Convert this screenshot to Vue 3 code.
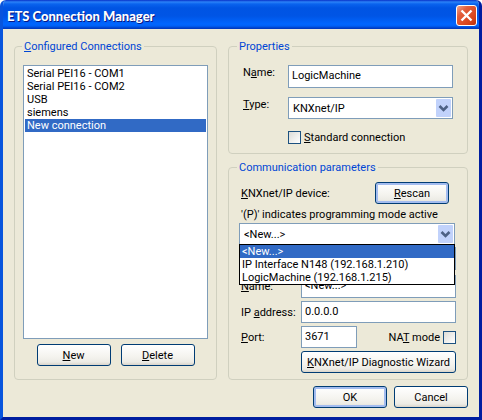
<script setup>
import { ref } from 'vue'

const connections = ref(['Serial PEI16 - COM1', 'Serial PEI16 - COM2', 'USB', 'siemens', 'New connection'])
const current = ref('New connection')
const name = ref('LogicMachine')
const type = ref('KNXnet/IP')
const standard = ref(false)

const devices = ['<New...>', 'IP Interface N148 (192.168.1.210)', 'LogicMachine (192.168.1.215)']
const device = ref(devices[0])
const listOpen = ref(true)
const deviceName = ref('<New...>')
const address = ref('0.0.0.0')
const port = ref('3671')
const nat = ref(false)

function pickDevice(item) {
  device.value = item
  listOpen.value = false
}
</script>

<template>
  <main class="window">
    <header class="titlebar">
      <h1>ETS Connection Manager</h1>
      <button class="close" type="button" aria-label="Close">
        <svg viewBox="0 0 19 19" aria-hidden="true">
          <path d="M4.5 4.5 L14.5 14.5 M14.5 4.5 L4.5 14.5" stroke="#fff" stroke-width="2.4" fill="none" />
        </svg>
      </button>
    </header>

    <form class="body" @submit.prevent>
      <div class="columns">
        <fieldset class="connections">
          <legend><u>C</u>onfigured Connections</legend>
          <ul class="list" role="listbox" aria-label="Configured Connections">
            <li
              v-for="item in connections"
              :key="item"
              role="option"
              :aria-selected="item === current"
              :class="{ selected: item === current }"
              @click="current = item"
            >{{ item }}</li>
          </ul>
          <div class="list-actions">
            <button class="btn" type="button"><span><u>N</u>ew</span></button>
            <button class="btn" type="button"><span><u>D</u>elete</span></button>
          </div>
        </fieldset>

        <div class="side">
          <fieldset class="properties">
            <legend>Properties</legend>
            <label for="name">N<u>a</u>me:</label>
            <input id="name" v-model="name" class="field tall" type="text">
            <label for="type"><u>T</u>ype:</label>
            <div class="combo">
              <select id="type" v-model="type" class="field">
                <option>KNXnet/IP</option>
              </select>
              <svg class="arrow" viewBox="0 0 15 18" aria-hidden="true">
                <rect width="15" height="18" rx="1" fill="#c1d2fb" />
                <path d="M3.5 7 L7.5 11 L11.5 7" stroke="#4d6185" stroke-width="2.6" fill="none" />
              </svg>
            </div>
            <div class="check standard">
              <input id="standard" v-model="standard" type="checkbox">
              <label for="standard"><u>S</u>tandard connection</label>
            </div>
          </fieldset>

          <fieldset class="communication">
            <legend>Communication parameters</legend>
            <div class="device-row">
              <label for="device"><u>K</u>NXnet/IP device:</label>
              <button class="btn focus" type="button"><span><u>R</u>escan</span></button>
            </div>
            <p class="note">'(P)' indicates programming mode active</p>
            <div class="combo device">
              <select id="device" v-model="device" class="field">
                <option v-for="item in devices" :key="item">{{ item }}</option>
              </select>
              <svg class="arrow" viewBox="0 0 15 18" aria-hidden="true">
                <rect width="15" height="18" rx="1" fill="#c1d2fb" />
                <path d="M3.5 7 L7.5 11 L11.5 7" stroke="#4d6185" stroke-width="2.6" fill="none" />
              </svg>
              <ul v-if="listOpen" class="popup" role="listbox" aria-label="Devices">
                <li
                  v-for="item in devices"
                  :key="item"
                  role="option"
                  :aria-selected="item === device"
                  :class="{ selected: item === device }"
                  @click="pickDevice(item)"
                >{{ item }}</li>
              </ul>
            </div>
            <input class="field tall medium" type="text" aria-label="Communication medium" disabled>
            <div class="params">
              <label for="device-name"><u>N</u>ame:</label>
              <input id="device-name" v-model="deviceName" class="field tall" type="text">
              <label for="address">IP <u>a</u>ddress:</label>
              <input id="address" v-model="address" class="field" type="text">
              <label for="port"><u>P</u>ort:</label>
              <div class="port-row">
                <input id="port" v-model="port" class="field" type="text">
                <div class="check">
                  <label for="nat">NA<u>T</u> mode</label>
                  <input id="nat" v-model="nat" type="checkbox">
                </div>
              </div>
              <button class="btn wizard" type="button"><span><u>K</u>NXnet/IP Diagnostic Wizard</span></button>
            </div>
          </fieldset>
        </div>
      </div>

      <footer class="footer">
        <button class="btn focus" type="submit">OK</button>
        <button class="btn" type="button">Cancel</button>
      </footer>
    </form>
  </main>
</template>

<style>
body {
  background: #fff;
}
</style>

<style scoped>
.window,
.window * {
  box-sizing: border-box;
}

.window {
  overflow: hidden;
  color: #000;
  background: #ece9d8;
  border: 3px solid #0831d9;
  border-color: #0855dd #001ea0 #001ea0 #0855dd;
  border-top: 0;
  border-radius: 6px 6px 0 0;
  font: 11px/13px Roboto, "Liberation Sans", sans-serif;
}

.titlebar {
  display: flex;
  align-items: center;
  justify-content: space-between;
  height: 29px;
  margin: 0 -3px;
  padding: 2px 5px 0 7px;
  background: linear-gradient(#0831c8 0, #2b82f8 2px, #0a63ee 4px, #0054e3 8px, #0055e5 16px, #0066ff 24px, #0060f5 26px, #0040c8 28px, #0036b8 29px);
}

h1 {
  margin: 0;
  padding-top: 1px;
  color: #fff;
  font: 900 13px/18px Lato, "Open Sans", sans-serif;
  text-shadow: 1px 1px 0 #0a1883;
}

.close {
  width: 21px;
  height: 21px;
  padding: 0;
  background: linear-gradient(135deg, #f0a58d 0, #e35f3d 30%, #d8431a 75%, #b8300c 100%);
  border: 1px solid #fff;
  border-radius: 3px;
}

.close svg {
  display: block;
  width: 19px;
  height: 19px;
}

.body {
  padding: 11px 11px 9px;
}

.columns {
  display: grid;
  grid-template-columns: 203fr 240fr;
  gap: 11px;
}

.side {
  display: grid;
  gap: 7px;
}

fieldset {
  min-width: 0;
  margin: 0;
  border: 1px solid #d0d0bf;
  border-radius: 4px;
}

legend {
  margin-left: -2px;
  padding: 0 2px;
  color: #0046d5;
}

.connections {
  display: flex;
  flex-direction: column;
  padding: 12px 8px 13px;
}

.connections legend {
  margin-left: -1px;
}

.properties legend {
  margin-left: -6px;
}

.list,
.popup {
  margin: 0;
  padding: 0;
  list-style: none;
  background: #fff;
}

.list {
  flex: 1;
  padding: 1px;
  border: 1px solid #7f9db9;
}

.list li,
.popup li {
  padding: 0 2px;
  white-space: nowrap;
  cursor: default;
}

.selected {
  color: #fff;
  background: #316ac5;
}

.list-actions {
  display: flex;
  justify-content: center;
  gap: 10px;
  padding-top: 5px;
}

.btn {
  min-width: 74px;
  height: 22px;
  padding: 0 4px;
  color: #000;
  font: inherit;
  white-space: nowrap;
  background: linear-gradient(#fff, #f4f3ee 60%, #ecebe5 85%, #d9d4ca);
  border: 1px solid #003c74;
  border-radius: 3px;
}

.btn.focus {
  box-shadow: inset 0 0 0 2px #a3bcef;
}

.field {
  width: 100%;
  min-width: 0;
  height: 22px;
  margin: 0;
  padding: 0 3px 2px;
  color: #000;
  font: inherit;
  background: #fff;
  border: 1px solid #7f9db9;
  border-radius: 0;
  outline: 0;
}

.field.tall {
  height: 23px;
  padding-bottom: 3px;
}

select.field {
  display: block;
  padding: 0 20px 0 4px;
  appearance: none;
}

.combo {
  position: relative;
}

.arrow {
  position: absolute;
  top: 2px;
  right: 2px;
  width: 15px;
  height: 18px;
  pointer-events: none;
}

.properties {
  display: grid;
  grid-template-columns: 45px 1fr;
  align-items: start;
  row-gap: 9px;
  padding: 12px 14px 9px;
}

.properties > label {
  padding-top: 1px;
}

.check {
  display: flex;
  align-items: center;
  gap: 3px;
}

.check input {
  width: 13px;
  height: 13px;
  margin: 0;
  appearance: none;
  background: linear-gradient(135deg, #dcdcd7, #fff);
  border: 1px solid #1c5180;
}

.check input:checked {
  background: #21a121;
}

.standard {
  grid-column: 2;
  padding-top: 3px;
}

.communication {
  padding: 8px 11px 6px 10px;
}

.device-row {
  display: flex;
  align-items: center;
  justify-content: space-between;
  padding: 0 7px 0 2px;
}

.note {
  margin: 0;
  padding: 4px 0 2px 2px;
  white-space: nowrap;
}

.popup {
  position: absolute;
  z-index: 1;
  top: 100%;
  right: 0;
  left: 0;
  margin-top: -1px;
  border: 1px solid #000;
}

.device {
  margin-right: 1px;
}

.medium {
  display: block;
  margin: 2px 0 5px;
  background: #ece9d8;
}

.params {
  display: grid;
  grid-template-columns: 60px 1fr;
  align-items: center;
  row-gap: 3px;
  padding-left: 2px;
  white-space: nowrap;
}

.port-row {
  display: flex;
  align-items: center;
  justify-content: space-between;
}

.port-row .field {
  width: 56px;
}

.wizard {
  grid-column: 2;
}

.footer {
  display: flex;
  justify-content: flex-end;
  gap: 7px;
  padding-top: 6px;
}
</style>
